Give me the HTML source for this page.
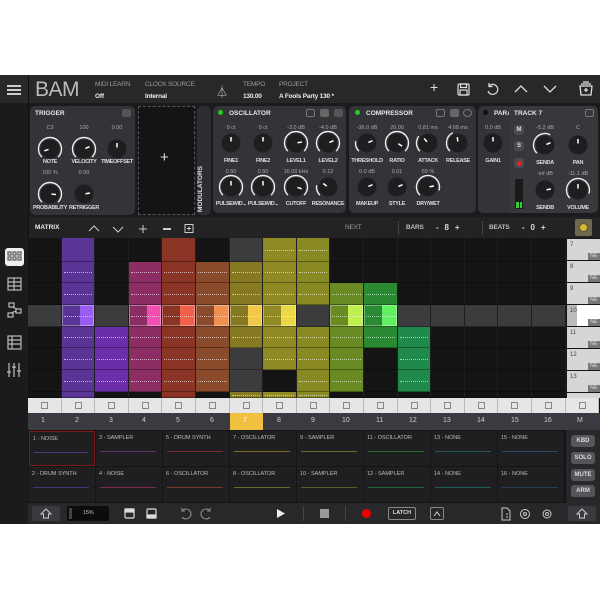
<!DOCTYPE html>
<html><head><meta charset="utf-8">
<style>
*{margin:0;padding:0;box-sizing:border-box}
body{width:600px;height:600px;background:#fff;position:relative;overflow:hidden;font-family:"Liberation Sans",sans-serif;}
.a{position:absolute}
#app{position:absolute;left:0;top:75px;width:600px;height:449px;background:#1b1b1d;overflow:hidden}
.t{position:absolute;font-size:6.5px;color:#c8c8cc;white-space:nowrap;font-weight:bold;letter-spacing:-.2px}
.card{position:absolute;background:#343438;border-radius:5px}
.h{position:absolute;font-size:6.5px;color:#e8e8ea;font-weight:bold}
.v{position:absolute;font-size:5.5px;color:#aaa;width:34px;text-align:center}
.l{position:absolute;font-size:5.5px;color:#ddd;width:40px;text-align:center;font-weight:bold;letter-spacing:-.3px}
.btn{position:absolute;background:#4a4a50;border-radius:3px;color:#ddd;font-size:6px;text-align:center;font-weight:bold}
.tile{position:absolute;background:#1f1f22;}
.tile span{position:absolute;left:3px;top:4px;font-size:5.5px;color:#bbb}
.tile i{position:absolute;left:4px;right:6px;top:20px;height:1px}
</style></head><body>
<div id="app">
<!-- header -->
<div class="a" style="left:0;top:0;width:600px;height:28px;background:#28282b"></div>
<div class="a" style="left:28px;top:0;width:1px;height:449px;background:#111"></div>
<div class="a" style="left:7px;top:10px;width:14px;height:1.5px;background:#ccc;box-shadow:0 4px 0 #ccc,0 8px 0 #ccc"></div>
<div class="a" style="left:35px;top:3px;font-size:21px;color:#bbb;font-weight:normal;letter-spacing:-0.5px">BAM</div>
<div class="t" style="left:95px;top:6px;color:#999;font-weight:normal">MIDI LEARN</div>
<div class="t" style="left:95px;top:18px;color:#eee">Off</div>
<div class="t" style="left:145px;top:6px;color:#999;font-weight:normal">CLOCK SOURCE</div>
<div class="t" style="left:145px;top:18px;color:#eee">Internal</div>
<div class="a" style="left:216px;top:8px;font-size:12px;color:#ccc">⏃</div>
<div class="t" style="left:243px;top:6px;color:#999;font-weight:normal">TEMPO</div>
<div class="t" style="left:243px;top:18px;color:#eee">130.00</div>
<div class="t" style="left:279px;top:6px;color:#999;font-weight:normal">PROJECT</div>
<div class="t" style="left:279px;top:18px;color:#eee">A Fools Party 130 *</div>
<div class="a" style="left:430px;top:4px;font-size:14px;color:#ddd">+</div>
<svg class="a" style="left:457px;top:8px" width="13" height="13" viewBox="0 0 13 13" fill="none" stroke="#ddd" stroke-width="1.2"><rect x="1" y="1" width="11" height="11" rx="1"/><rect x="3.5" y="1" width="6" height="3.5"/><rect x="3" y="7" width="7" height="5"/></svg>
<svg class="a" style="left:486px;top:7px" width="13" height="14" viewBox="0 0 13 14" fill="none" stroke="#ddd" stroke-width="1.2"><path d="M3 4a5 5 0 1 1-1 5"/><path d="M3 1v3.5h3.5"/></svg>
<svg class="a" style="left:514px;top:10px" width="14" height="8" viewBox="0 0 14 8" fill="none" stroke="#ddd" stroke-width="1.3"><path d="M1 7l6-6 6 6"/></svg>
<svg class="a" style="left:543px;top:10px" width="14" height="8" viewBox="0 0 14 8" fill="none" stroke="#ddd" stroke-width="1.3"><path d="M1 1l6 6 6-6"/></svg>
<svg class="a" style="left:578px;top:6px" width="16" height="16" viewBox="0 0 16 16" fill="none" stroke="#ddd" stroke-width="1.3"><path d="M3 3h10M2 5h12l-1 9H3z"/><path d="M6 9h4M8 7v4"/><path d="M5 1h6"/></svg>

<!-- device area -->
<div class="card" style="left:30px;top:31px;width:105px;height:109px"></div>
<div class="h" style="left:35px;top:35px">TRIGGER</div>
<div class="a" style="left:122px;top:34px;width:9px;height:8px;background:#555;border-radius:2px"></div>
<div class="a" style="left:138px;top:31px;width:57px;height:109px;border:1px dashed #555;background:#141416"></div>
<div class="a" style="left:160px;top:74px;font-size:15px;color:#ddd">+</div>
<div class="card" style="left:197px;top:31px;width:14px;height:109px;background:#2e2e32"></div>
<div class="a" style="left:197px;top:137px;transform:rotate(-90deg);transform-origin:0 0;font-size:6.5px;color:#ddd;font-weight:bold;width:60px">MODULATORS</div>
<div class="card" style="left:213px;top:31px;width:133px;height:107px"></div>
<div class="a" style="left:218px;top:35px;width:5px;height:5px;border-radius:50%;background:#2c2"></div>
<div class="h" style="left:229px;top:35px">OSCILLATOR</div>
<div class="a" style="left:306px;top:34px;width:9px;height:8px;border:1px solid #777;border-radius:2px"></div>
<div class="a" style="left:320px;top:34px;width:9px;height:8px;background:#666;border-radius:2px"></div>
<div class="a" style="left:334px;top:34px;width:9px;height:8px;background:#555;border-radius:2px"></div>
<div class="card" style="left:349px;top:31px;width:127px;height:107px"></div>
<div class="a" style="left:355px;top:35px;width:5px;height:5px;border-radius:50%;background:#2c2"></div>
<div class="h" style="left:366px;top:35px">COMPRESSOR</div>
<div class="a" style="left:436px;top:34px;width:9px;height:8px;border:1px solid #777;border-radius:2px"></div>
<div class="a" style="left:450px;top:34px;width:9px;height:8px;background:#666;border-radius:2px"></div>
<div class="a" style="left:463px;top:34px;width:9px;height:8px;border:1px solid #777;border-radius:50%"></div>
<div class="card" style="left:478px;top:31px;width:40px;height:107px"></div>
<div class="a" style="left:483px;top:35px;width:5px;height:5px;border-radius:50%;background:#111"></div>
<div class="h" style="left:494px;top:35px">PARA</div>
<div class="card" style="left:509px;top:31px;width:89px;height:107px;background:#38383c"></div>
<div class="h" style="left:514px;top:35px">TRACK 7</div>
<div class="a" style="left:585px;top:34px;width:9px;height:8px;border:1px solid #777;border-radius:2px"></div>
<div class="btn" style="left:514px;top:50px;width:10px;height:10px;line-height:10px">M</div>
<div class="btn" style="left:514px;top:66px;width:10px;height:10px;line-height:10px">S</div>
<div class="btn" style="left:514px;top:83px;width:10px;height:10px;background:#4a4a50"><div class="a" style="left:2.5px;top:2.5px;width:5px;height:5px;border-radius:50%;background:#e22"></div></div>
<div class="a" style="left:515px;top:104px;width:8px;height:30px;background:#1a1a1a"></div>
<div class="a" style="left:516px;top:127px;width:2.5px;height:6px;background:#3c3"></div>
<div class="a" style="left:519.5px;top:127px;width:2.5px;height:6px;background:#3c3"></div>

<svg class="a" style="left:0;top:0" width="600" height="150" id="knobs"></svg>
<!-- values/labels -->
<div class="v" style="left:33px;top:50px">C3</div><div class="l" style="left:30px;top:84px">NOTE</div>
<div class="v" style="left:67px;top:50px">100</div><div class="l" style="left:64px;top:84px">VELOCITY</div>
<div class="v" style="left:100px;top:50px">0.00</div><div class="l" style="left:97px;top:84px">TIMEOFFSET</div>
<div class="v" style="left:33px;top:95px">100 %</div><div class="l" style="left:30px;top:130px">PROBABILITY</div>
<div class="v" style="left:67px;top:95px">0.00</div><div class="l" style="left:64px;top:130px">RETRIGGER</div>
<div class="v" style="left:214px;top:50px">0 ct</div><div class="l" style="left:211px;top:83px">FINE1</div>
<div class="v" style="left:246px;top:50px">0 ct</div><div class="l" style="left:243px;top:83px">FINE2</div>
<div class="v" style="left:279px;top:50px">-3.0 dB</div><div class="l" style="left:276px;top:83px">LEVEL1</div>
<div class="v" style="left:311px;top:50px">-4.0 dB</div><div class="l" style="left:308px;top:83px">LEVEL2</div>
<div class="v" style="left:214px;top:94px">0.50</div><div class="l" style="left:211px;top:126px">PULSEWID...</div>
<div class="v" style="left:246px;top:94px">0.50</div><div class="l" style="left:243px;top:126px">PULSEWID...</div>
<div class="v" style="left:279px;top:94px">16.00 kHz</div><div class="l" style="left:276px;top:126px">CUTOFF</div>
<div class="v" style="left:311px;top:94px">0.12</div><div class="l" style="left:308px;top:126px">RESONANCE</div>
<div class="v" style="left:350px;top:50px">-36.0 dB</div><div class="l" style="left:347px;top:83px">THRESHOLD</div>
<div class="v" style="left:380px;top:50px">20.00</div><div class="l" style="left:377px;top:83px">RATIO</div>
<div class="v" style="left:411px;top:50px">0.81 ms</div><div class="l" style="left:408px;top:83px">ATTACK</div>
<div class="v" style="left:441px;top:50px">4.68 ms</div><div class="l" style="left:438px;top:83px">RELEASE</div>
<div class="v" style="left:350px;top:94px">0.0 dB</div><div class="l" style="left:347px;top:126px">MAKEUP</div>
<div class="v" style="left:380px;top:94px">0.01</div><div class="l" style="left:377px;top:126px">STYLE</div>
<div class="v" style="left:411px;top:94px">69 %</div><div class="l" style="left:408px;top:126px">DRY/WET</div>
<div class="v" style="left:476px;top:50px">0.0 dB</div><div class="l" style="left:473px;top:83px">GAIN1</div>
<div class="v" style="left:528px;top:50px">-5.2 dB</div><div class="l" style="left:525px;top:85px">SENDA</div>
<div class="v" style="left:561px;top:50px">C</div><div class="l" style="left:558px;top:85px">PAN</div>
<div class="v" style="left:528px;top:96px">-inf dB</div><div class="l" style="left:525px;top:130px">SENDB</div>
<div class="v" style="left:561px;top:96px">-11.1 dB</div><div class="l" style="left:558px;top:130px">VOLUME</div>

<!-- matrix toolbar -->
<div class="a" style="left:29px;top:142px;width:571px;height:21px;background:#232326"></div>
<div class="h" style="left:35px;top:149px">MATRIX</div>
<svg class="a" style="left:88px;top:149px" width="110" height="10" fill="none" stroke="#ccc" stroke-width="1"><path d="M1 7l5-5 5 5M25 3l5 5 5-5"/><path d="M55 1v8M51 5h8" /><path d="M75 5h8" stroke-width="2"/><rect x="97" y="0.5" width="8" height="8"/><path d="M101 2.5v4M99 4.5h4"/></svg>
<div class="t" style="left:345px;top:149px;color:#999;font-weight:normal">NEXT</div>
<div class="a" style="left:398px;top:146px;width:1px;height:14px;background:#444"></div>
<div class="t" style="left:406px;top:149px;color:#bbb">BARS</div>
<div class="t" style="left:436px;top:148px;color:#ddd;font-size:8px">-&nbsp;&nbsp;&nbsp;8&nbsp;&nbsp;&nbsp;+</div>
<div class="a" style="left:482px;top:146px;width:1px;height:14px;background:#444"></div>
<div class="t" style="left:489px;top:149px;color:#bbb">BEATS</div>
<div class="t" style="left:522px;top:148px;color:#ddd;font-size:8px">-&nbsp;&nbsp;&nbsp;0&nbsp;&nbsp;&nbsp;+</div>
<div class="a" style="left:575px;top:144px;width:17px;height:17px;background:#6b6a50;border-radius:2px"><div class="a" style="left:4px;top:4px;width:9px;height:9px;border-radius:50%;background:#d8b830;border:1px solid #553"></div></div>

<!-- sidebar icons -->
<div class="a" style="left:5px;top:173px;width:19px;height:18px;background:#eee;border-radius:3px"></div>
<svg class="a" style="left:0;top:170px" width="28" height="140" fill="none" stroke="#bbb" stroke-width="1.2">
<g stroke="#555"><rect x="8" y="7" width="3" height="3"/><rect x="13" y="7" width="3" height="3"/><rect x="18" y="7" width="3" height="3"/><rect x="8" y="12" width="3" height="3"/><rect x="13" y="12" width="3" height="3"/><rect x="18" y="12" width="3" height="3"/></g>
<rect x="8" y="33" width="13" height="12"/><path d="M8 37h13M8 41h13M14 33v12"/>
<rect x="9" y="58" width="5" height="4"/><rect x="16" y="64" width="5" height="4"/><rect x="8" y="68" width="5" height="4"/><path d="M12 62l5 2M11 68l5-2"/>
<rect x="8" y="91" width="13" height="13"/><path d="M8 95h13M8 99h13M12 91v13"/>
<path d="M9 118v14M14 118v14M19 118v14"/><path d="M7 127h4M12 122h4M17 126h4"/>
</svg>

<!-- grid -->
<div id="grid" class="a" style="left:28px;top:163px;width:572px;height:192px;background:#141414"></div>

<!-- track tiles -->
<div class="a" style="left:28px;top:355px;width:572px;height:73px;background:#151517"></div>
<div class="tile" style="left:29px;top:356px;width:66px;height:35px;border:1px solid #7a1a1a"><span>1 - NOISE</span><i style="background:#4a3a80"></i></div>
<div class="tile" style="left:96px;top:356px;width:66px;height:35px"><span>3 - SAMPLER</span><i style="background:#6a2a70"></i></div>
<div class="tile" style="left:163px;top:356px;width:66px;height:35px"><span>5 - DRUM SYNTH</span><i style="background:#7a2a2a"></i></div>
<div class="tile" style="left:230px;top:356px;width:66px;height:35px"><span>7 - OSCILLATOR</span><i style="background:#7a6a2a"></i></div>
<div class="tile" style="left:297px;top:356px;width:66px;height:35px"><span>9 - SAMPLER</span><i style="background:#6a6a2a"></i></div>
<div class="tile" style="left:364px;top:356px;width:66px;height:35px"><span>11 - OSCILLATOR</span><i style="background:#2a6a2a"></i></div>
<div class="tile" style="left:431px;top:356px;width:66px;height:35px"><span>13 - NONE</span><i style="background:#1f5a50"></i></div>
<div class="tile" style="left:498px;top:356px;width:66px;height:35px"><span>15 - NONE</span><i style="background:#2a4a6a"></i></div>
<div class="tile" style="left:29px;top:392px;width:66px;height:35px"><span>2 - DRUM SYNTH</span><i style="background:#3a3a7a"></i></div>
<div class="tile" style="left:96px;top:392px;width:66px;height:35px"><span>4 - NOISE</span><i style="background:#7a2a50"></i></div>
<div class="tile" style="left:163px;top:392px;width:66px;height:35px"><span>6 - OSCILLATOR</span><i style="background:#7a3a2a"></i></div>
<div class="tile" style="left:230px;top:392px;width:66px;height:35px"><span>8 - OSCILLATOR</span><i style="background:#6a6a2a"></i></div>
<div class="tile" style="left:297px;top:392px;width:66px;height:35px"><span>10 - SAMPLER</span><i style="background:#5a5a2a"></i></div>
<div class="tile" style="left:364px;top:392px;width:66px;height:35px"><span>12 - SAMPLER</span><i style="background:#1f6a3a"></i></div>
<div class="tile" style="left:431px;top:392px;width:66px;height:35px"><span>14 - NONE</span><i style="background:#1f5a5a"></i></div>
<div class="tile" style="left:498px;top:392px;width:66px;height:35px"><span>16 - NONE</span><i style="background:#2a3a5a"></i></div>
<div class="a" style="left:566px;top:355px;width:34px;height:73px;background:#28282b"></div>
<div class="btn" style="left:571px;top:360px;width:24px;height:12px;line-height:12px;background:#55555b">KBD</div>
<div class="btn" style="left:571px;top:377px;width:24px;height:12px;line-height:12px;background:#55555b">SOLO</div>
<div class="btn" style="left:571px;top:394px;width:24px;height:12px;line-height:12px;background:#55555b">MUTE</div>
<div class="btn" style="left:571px;top:410px;width:24px;height:12px;line-height:12px;background:#55555b">ARM</div>

<!-- bottom bar -->
<div class="a" style="left:28px;top:428px;width:572px;height:21px;background:#28282b"></div>
<div class="a" style="left:32px;top:431px;width:28px;height:15px;background:#3a3a3e;border-radius:2px"></div>
<svg class="a" style="left:40px;top:433px" width="12" height="11" fill="none" stroke="#ccc"><path d="M6 1l5 5H8.5v4h-5V6H1z"/></svg>
<div class="a" style="left:67px;top:431px;width:42px;height:15px;background:#0c0c0c;border-radius:2px"></div>
<div class="a" style="left:69px;top:433px;width:3px;height:11px;background:#444"></div>
<div class="t" style="left:83px;top:435px;font-size:5.5px;font-weight:normal">15%</div>
<svg class="a" style="left:123px;top:432px" width="40" height="14" fill="none" stroke="#ddd" stroke-width="1.2"><rect x="2" y="2" width="9" height="9" rx="1"/><rect x="2" y="2" width="9" height="3" fill="#ddd"/><rect x="24" y="2" width="9" height="9" rx="1"/><rect x="24" y="8" width="9" height="3" fill="#ddd"/></svg>
<svg class="a" style="left:178px;top:432px" width="38" height="14" fill="none" stroke="#888" stroke-width="1.1"><path d="M4 4a5 5 0 1 1 0 6M4 1v3h3"/><path d="M32 4a5 5 0 1 0 0 6M32 1v3h-3"/></svg>
<svg class="a" style="left:276px;top:433px" width="10" height="11"><path d="M1 1l8 4.5L1 10z" fill="#eee"/></svg>
<div class="a" style="left:303px;top:431px;width:1px;height:15px;background:#444"></div>
<div class="a" style="left:320px;top:434px;width:9px;height:9px;background:#999"></div>
<div class="a" style="left:345px;top:431px;width:1px;height:15px;background:#444"></div>
<div class="a" style="left:362px;top:434px;width:9px;height:9px;border-radius:50%;background:#e00"></div>
<div class="a" style="left:388px;top:432px;width:28px;height:13px;border:1px solid #888;border-radius:2px;font-size:5.5px;color:#ddd;font-weight:bold;text-align:center;line-height:11px">LATCH</div>
<div class="a" style="left:430px;top:432px;width:14px;height:13px;border:1px solid #888;border-radius:2px"></div>
<svg class="a" style="left:432px;top:434px" width="10" height="9" fill="none" stroke="#ccc"><path d="M2 7l3-4 3 4"/></svg>
<svg class="a" style="left:498px;top:431px" width="60" height="15" fill="none" stroke="#ccc" stroke-width="1"><path d="M4 2h5l3 3v9H4z"/><path d="M8 8h2M8 11h2"/><circle cx="27" cy="8" r="4.5"/><circle cx="27" cy="8" r="1.5"/><circle cx="49" cy="8" r="4"/><circle cx="49" cy="8" r="1.5"/></svg>
<div class="a" style="left:568px;top:431px;width:28px;height:15px;background:#3a3a3e;border-radius:2px"></div>
<svg class="a" style="left:576px;top:433px" width="12" height="11" fill="none" stroke="#ccc"><path d="M6 1l5 5H8.5v4h-5V6H1z"/></svg>
</div>

<script>
var K=[[50,74,1,-0.8],[84,74,1,0.5],[117,74,0,0],[50,119,1,0.7],[84,119,0,0.6],
[231,68,0,0],[263,68,0,0],[296,68,1,0.6],[328,68,1,0.5],[231,112,1,0],[263,112,1,0],[296,112,1,0.8],[328,112,0.2,-0.4],
[367,68,0.2,0.5],[397,68,1,0.9],[428,68,0.3,-0.3],[458,68,0.4,-0.05],[367,112,0,0.5],[397,112,0,0.5],[428,112,0.9,0.6],
[493,68,0,0],[545,70,0.6,0.5],[578,70,0,0],[545,115,0,0.6],[578,115,0.9,0]];
(function(){var out='';K.forEach(function(k){var x=k[0],y=k[1],r=11.5;
out+='<circle cx="'+x+'" cy="'+y+'" r="9.5" fill="#1e1e20"/>';
if(k[2]>0){var st=135,en=135+k[2]*270;function p(d){var t=d*Math.PI/180;return (x+r*Math.cos(t)).toFixed(2)+' '+(y+r*Math.sin(t)).toFixed(2);}
out+='<path d="M'+p(st)+' A'+r+' '+r+' 0 '+((en-st)>180?1:0)+' 1 '+p(en)+'" fill="none" stroke="#eee" stroke-width="1.4"/>';}
var ang=k[3]*2.35;var dx=Math.sin(ang),dy=-Math.cos(ang);
out+='<line x1="'+(x+dx*1.5)+'" y1="'+(y+dy*1.5)+'" x2="'+(x+dx*6)+'" y2="'+(y+dy*6)+'" stroke="#fff" stroke-width="1.5"/>';});
document.getElementById('knobs').innerHTML=out;})();
var cols=[
["...g....","",""],["pccscccp","#5a3596","#9a5cf0"],["...gccc.","#6a2ea8",""],[".ccsccc.","#8c2d63","#f050b0"],
["pccscccp","#8a3426","#f0604a"],[".ccsccc.","#8a4a2c","#f09050"],["gccscggc","#857a22","#f2c84a"],["cccscc.c","#8f8a24","#ead848"],
["cccgcccc","#8a8a24",""],["..csccc.","#6a8a24","#c0f050"],["..csc...","#2a8a34","#60f060"],["...gccc.","#1f8a4c",""],
["...g....","",""],["...g....","",""],["...g....","",""],["...g....","",""]];
var rows=[[0,24],[24,21],[45,22],[67,22],[89,21],[110,22],[132,22],[154,6]];
var g='';
cols.forEach(function(c,i){var x=(i*33.6).toFixed(1);
 for(var r=0;r<8;r++){var ch=c[0][r],y=rows[r][0],h=rows[r][1];
  var bg=ch=='.'?'#141414':ch=='g'?'#3c3c3e':c[1];
  g+='<div style="position:absolute;left:'+x+'px;top:'+y+'px;width:33.6px;height:'+h+'px;background:'+bg+';border-right:1px solid #1f1f1f;border-bottom:1px solid rgba(0,0,0,.35)">';
  if(ch=='s'){g+='<div style="position:absolute;right:0;top:0;width:45%;height:100%;background:'+c[2]+'"></div><div style="position:absolute;inset:0;border:1px solid rgba(255,255,255,.35)"></div>';}
  if(ch=='c'||ch=='s'){g+='<div style="position:absolute;left:2px;right:2px;top:50%;border-top:1px dotted rgba(255,255,255,.6)"></div>';}
  g+='</div>';}
});
for(var i=0;i<17;i++){var x=(i*33.6).toFixed(1);
 g+='<div style="position:absolute;left:'+x+'px;top:160px;width:33.6px;height:15px;background:#e6e6e6;border-right:1px solid #bbb"><div style="position:absolute;left:13px;top:4px;width:7px;height:7px;border:1px solid #888"></div></div>';}
document.getElementById('grid').innerHTML=g;
</script>
<!-- number row -->
<div class="a" style="left:28px;top:413px;width:572px;height:17px;background:#3a3a40"></div>
<div class="a" style="left:230px;top:413px;width:33px;height:17px;background:#f0c040"></div>
<div class="a" style="left:28px;top:417px;width:572px;font-size:7px;color:#ccc">
<span class="a" style="left:13px">1</span><span class="a" style="left:47px">2</span><span class="a" style="left:81px">3</span><span class="a" style="left:114px">4</span><span class="a" style="left:148px">5</span><span class="a" style="left:182px">6</span><span class="a" style="left:215px;color:#fff">7</span><span class="a" style="left:249px">8</span><span class="a" style="left:283px">9</span><span class="a" style="left:314px">10</span><span class="a" style="left:348px">11</span><span class="a" style="left:381px">12</span><span class="a" style="left:415px">13</span><span class="a" style="left:449px">14</span><span class="a" style="left:483px">15</span><span class="a" style="left:516px">16</span><span class="a" style="left:549px">M</span></div>
<div class="a" style="left:566px;top:238px;width:34px;height:160px;background:#151515">
<div class="a" style="left:1px;top:1px;width:33px;height:21px;background:#d6d6d6"><span class="a" style="left:3px;top:3px;font-size:6px;color:#444">7</span><span class="a" style="right:0;bottom:0;width:12px;height:7px;background:#777;font-size:5.5px;color:#ddd;text-align:center">NE</span></div>
<div class="a" style="left:1px;top:23px;width:33px;height:21px;background:#d6d6d6"><span class="a" style="left:3px;top:3px;font-size:6px;color:#444">8</span><span class="a" style="right:0;bottom:0;width:12px;height:7px;background:#777;font-size:5.5px;color:#ddd;text-align:center">NE</span></div>
<div class="a" style="left:1px;top:45px;width:33px;height:21px;background:#d6d6d6"><span class="a" style="left:3px;top:3px;font-size:6px;color:#444">9</span><span class="a" style="right:0;bottom:0;width:12px;height:7px;background:#777;font-size:5.5px;color:#ddd;text-align:center">NE</span></div>
<div class="a" style="left:1px;top:67px;width:33px;height:21px;background:#fff"><span class="a" style="left:0;top:0;width:10px;height:21px;background:#bbb"></span><span class="a" style="left:3px;top:3px;font-size:6px;color:#444">10</span><span class="a" style="right:0;bottom:0;width:12px;height:7px;background:#777;font-size:5.5px;color:#ddd;text-align:center">NE</span></div>
<div class="a" style="left:1px;top:89px;width:33px;height:21px;background:#d6d6d6"><span class="a" style="left:3px;top:3px;font-size:6px;color:#444">11</span><span class="a" style="right:0;bottom:0;width:12px;height:7px;background:#777;font-size:5.5px;color:#ddd;text-align:center">NE</span></div>
<div class="a" style="left:1px;top:111px;width:33px;height:21px;background:#d6d6d6"><span class="a" style="left:3px;top:3px;font-size:6px;color:#444">12</span><span class="a" style="right:0;bottom:0;width:12px;height:7px;background:#777;font-size:5.5px;color:#ddd;text-align:center">NE</span></div>
<div class="a" style="left:1px;top:133px;width:33px;height:21px;background:#d6d6d6"><span class="a" style="left:3px;top:3px;font-size:6px;color:#444">13</span><span class="a" style="right:0;bottom:0;width:12px;height:7px;background:#777;font-size:5.5px;color:#ddd;text-align:center">NE</span></div>
<div class="a" style="left:1px;top:155px;width:33px;height:5px;background:#d6d6d6"></div>
</div>
</body></html>
